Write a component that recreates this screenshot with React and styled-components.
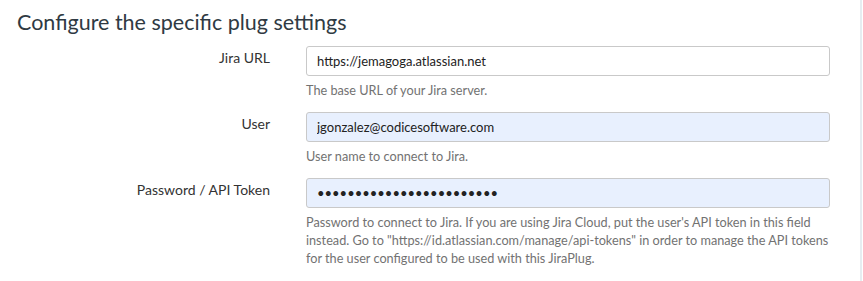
import React from 'react';
import styled, { createGlobalStyle } from 'styled-components';

const GlobalStyle = createGlobalStyle`
  body {
    margin: 0;
    background: #fff;
    font-family: Lato, "Open Sans", sans-serif;
  }
`;

const Panel = styled.div`
  width: 860px;
  height: 281px;
  border-right: 2px solid #e6edf1;
  box-sizing: content-box;
  padding-top: 9px;
`;

const Heading = styled.h2`
  margin: 0 0 11px 17px;
  font-size: 21.5px;
  font-weight: 400;
  line-height: 26px;
  color: #2f3a43;
`;

const Row = styled.div`
  display: grid;
  grid-template-columns: 270px 524px;
  column-gap: 36px;
  margin-bottom: 13px;
`;

const Label = styled.label`
  text-align: right;
  font-size: 14px;
  line-height: 18px;
  padding-top: 3px;
  color: #333;
`;

const Field = styled.div`
  display: flex;
  flex-direction: column;
`;

const Input = styled.input`
  box-sizing: border-box;
  width: 100%;
  height: 30px;
  padding: 0 10px;
  border: 1px solid #c9c9c9;
  border-radius: 3px;
  background: ${(p) => (p.$filled ? '#e8f0fe' : '#fff')};
  font-family: Lato, sans-serif;
  font-size: 13px;
  color: #222;
  outline: none;
`;

const Help = styled.p`
  margin: 5px 0 0;
  font-size: 12.7px;
  line-height: 18px;
  color: #727272;
`;

const App = () => {
  return (
    <>
      <GlobalStyle />
      <Panel>
        <Heading>Configure the specific plug settings</Heading>
        <Row>
          <Label>Jira URL</Label>
          <Field>
            <Input type="text" defaultValue="https://jemagoga.atlassian.net" readOnly />
            <Help>The base URL of your Jira server.</Help>
          </Field>
        </Row>
        <Row>
          <Label>User</Label>
          <Field>
            <Input type="text" $filled defaultValue="jgonzalez@codicesoftware.com" readOnly />
            <Help>User name to connect to Jira.</Help>
          </Field>
        </Row>
        <Row>
          <Label>Password / API Token</Label>
          <Field>
            <Input type="password" $filled defaultValue="abcdefghijklmnopqrstuvwx" readOnly />
            <Help>
              Password to connect to Jira. If you are using Jira Cloud, put the user's API token in this field
              instead. Go to "https://id.atlassian.com/manage/api-tokens" in order to manage the API tokens
              for the user configured to be used with this JiraPlug.
            </Help>
          </Field>
        </Row>
      </Panel>
    </>
  );
};

export default App;
